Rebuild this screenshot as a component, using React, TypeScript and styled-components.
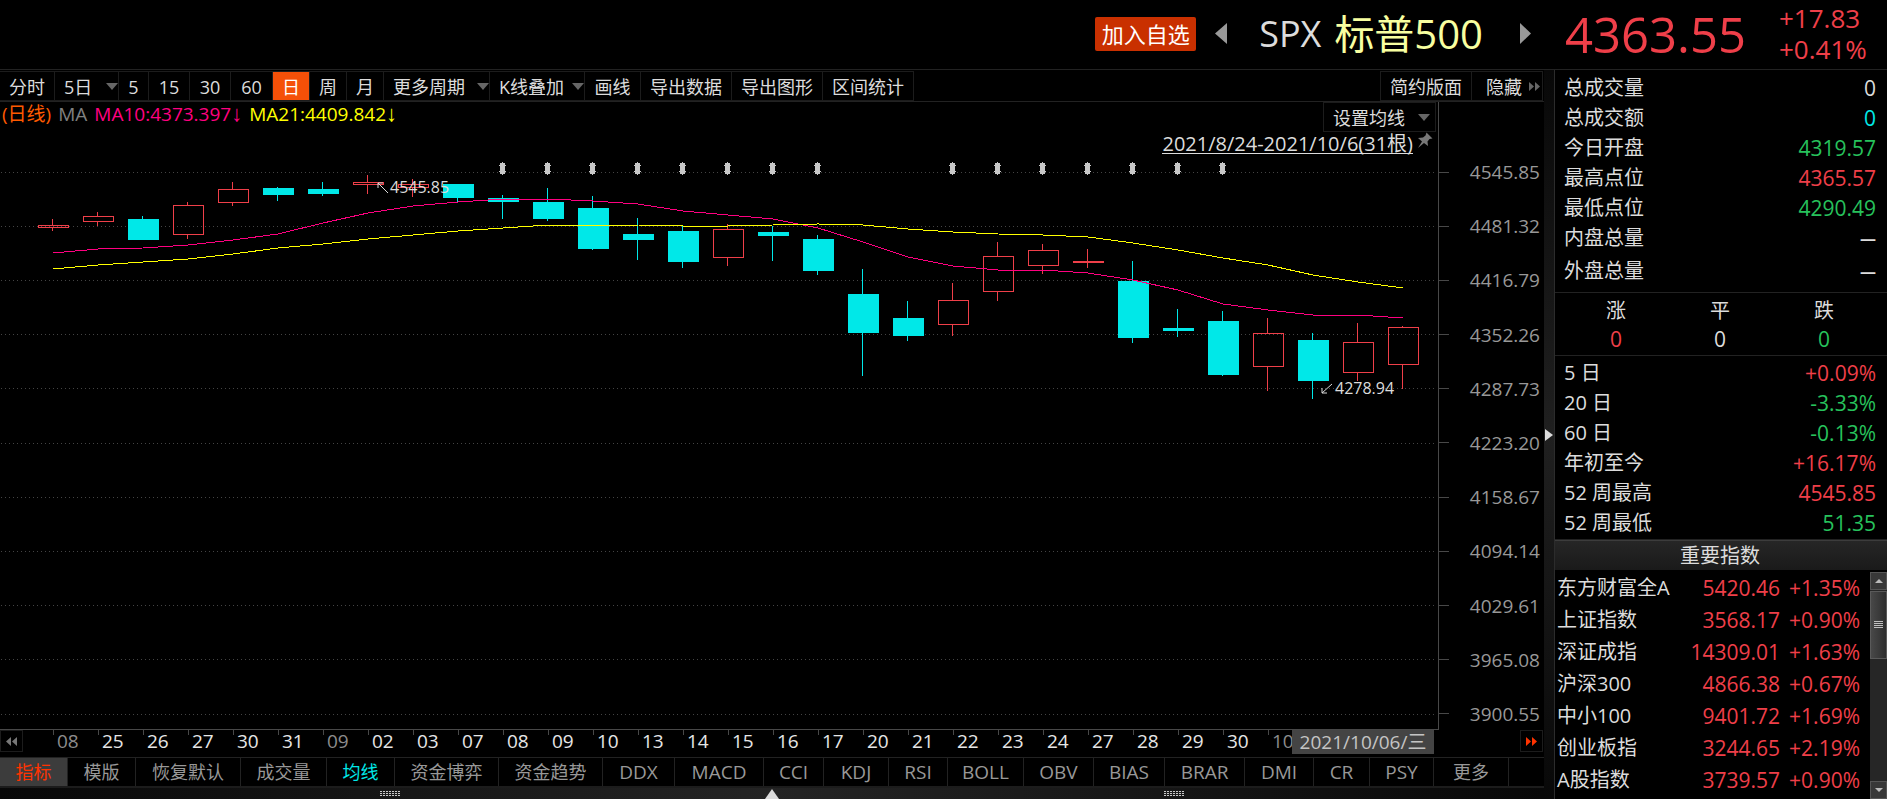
import React from "react";
import styled, { createGlobalStyle } from "styled-components";

const RED = "#ef3f49";
const GREEN = "#27c25c";
const CYAN = "#00e8e8";
const LINE = "#222222";
const TEXT = "#dcdcdc";
const MUTED = "#989898";

const GlobalStyle = createGlobalStyle`
  * { box-sizing: border-box; }
  body {
    margin: 0;
    background: #000;
    color: ${TEXT};
    font-family: "Open Sans", "Noto Sans CJK SC", sans-serif;
    font-size: 18px;
  }
  button {
    margin: 0;
    padding: 0;
    border: 0;
    background: none;
    color: inherit;
    font: inherit;
    cursor: pointer;
  }
  a { color: inherit; }
`;

/* ---------- data ---------- */

type Candle = { up: boolean; high: number; top: number; bottom: number; low: number };
const c = (up: number, high: number, top: number, bottom: number, low: number): Candle => ({
  up: up === 1, high, top, bottom, low,
});

const candles: Candle[] = [
  c(1, 219, 225, 228, 231), c(1, 212, 216, 222, 226), c(0, 216, 219, 240, 240),
  c(1, 202, 205, 235, 239), c(1, 182, 189, 203, 206), c(0, 187, 188, 195, 201),
  c(0, 182, 189, 194, 196), c(1, 175, 182, 185, 194), c(1, 179, 184, 188, 197),
  c(0, 184, 184, 198, 203), c(0, 195, 198, 202, 219), c(0, 188, 202, 219, 221),
  c(0, 196, 208, 249, 250), c(0, 218, 234, 240, 260), c(0, 225, 231, 262, 268),
  c(1, 224, 229, 258, 266), c(0, 226, 232, 236, 261), c(0, 235, 239, 271, 275),
  c(0, 269, 294, 333, 376), c(0, 301, 318, 336, 341), c(1, 283, 300, 325, 336),
  c(1, 242, 256, 292, 301), c(1, 244, 250, 266, 274), c(1, 249, 261, 263, 268),
  c(0, 261, 281, 338, 343), c(0, 309, 328, 331, 337), c(0, 311, 321, 375, 376),
  c(1, 318, 333, 367, 391), c(0, 333, 340, 381, 399), c(1, 323, 342, 373, 381),
  c(1, 326, 327, 365, 389),
];
const ma10 = [253, 249, 248, 245, 240, 234, 223, 213, 206, 202, 199, 199, 201, 204, 211, 215, 219, 228, 242, 257, 266, 270, 270, 273, 280, 290, 304, 310, 315, 315, 318];
const ma21 = [269, 265, 262, 259, 254, 248, 244, 239, 235, 231, 228, 225, 225, 225, 226, 226, 225, 224, 225, 229, 232, 234, 235, 237, 243, 250, 258, 265, 275, 282, 288];
const marks = [10, 11, 12, 13, 14, 15, 16, 17, 20, 21, 22, 23, 24, 25, 26];

const prices = ["4545.85", "4481.32", "4416.79", "4352.26", "4287.73", "4223.20", "4158.67", "4094.14", "4029.61", "3965.08", "3900.55"];
const dates = ["08", "25", "26", "27", "30", "31", "09", "02", "03", "07", "08", "09", "10", "13", "14", "15", "16", "17", "20", "21", "22", "23", "24", "27", "28", "29", "30", "10"];
const monthStarts = [0, 6, 27];

const periods: { label: string; width: number; caret?: boolean; active?: boolean }[] = [
  { label: "分时", width: 55 },
  { label: "5日", width: 64, caret: true },
  { label: "5", width: 30 },
  { label: "15", width: 41 },
  { label: "30", width: 41 },
  { label: "60", width: 42 },
  { label: "日", width: 37, active: true },
  { label: "周", width: 37 },
  { label: "月", width: 37 },
  { label: "更多周期", width: 106, caret: true },
  { label: "K线叠加", width: 95, caret: true },
  { label: "画线", width: 56 },
  { label: "导出数据", width: 91 },
  { label: "导出图形", width: 91 },
  { label: "区间统计", width: 91 },
];

const indicators: { label: string; width: number; tone?: string; active?: boolean }[] = [
  { label: "指标", width: 68, tone: "#ff3300", active: true },
  { label: "模版", width: 68 },
  { label: "恢复默认", width: 105 },
  { label: "成交量", width: 86 },
  { label: "均线", width: 68, tone: CYAN },
  { label: "资金博弈", width: 104 },
  { label: "资金趋势", width: 104 },
  { label: "DDX", width: 72 },
  { label: "MACD", width: 89 },
  { label: "CCI", width: 60 },
  { label: "KDJ", width: 65 },
  { label: "RSI", width: 59 },
  { label: "BOLL", width: 76 },
  { label: "OBV", width: 70 },
  { label: "BIAS", width: 71 },
  { label: "BRAR", width: 80 },
  { label: "DMI", width: 69 },
  { label: "CR", width: 56 },
  { label: "PSY", width: 64 },
  { label: "更多", width: 75 },
];

const quotes: [string, string, string][] = [
  ["总成交量", "0", TEXT],
  ["总成交额", "0", CYAN],
  ["今日开盘", "4319.57", GREEN],
  ["最高点位", "4365.57", RED],
  ["最低点位", "4290.49", GREEN],
  ["内盘总量", "—", TEXT],
  ["外盘总量", "—", TEXT],
];
const changes: [string, string, string][] = [
  ["5 日", "+0.09%", RED],
  ["20 日", "-3.33%", GREEN],
  ["60 日", "-0.13%", GREEN],
  ["年初至今", "+16.17%", RED],
  ["52 周最高", "4545.85", RED],
  ["52 周最低", "51.35", GREEN],
];
const indexes: [string, string, string][] = [
  ["东方财富全A", "5420.46", "+1.35%"],
  ["上证指数", "3568.17", "+0.90%"],
  ["深证成指", "14309.01", "+1.63%"],
  ["沪深300", "4866.38", "+0.67%"],
  ["中小100", "9401.72", "+1.69%"],
  ["创业板指", "3244.65", "+2.19%"],
  ["A股指数", "3739.57", "+0.90%"],
];

/* ---------- shell ---------- */

const Page = styled.div`
  display: flex;
  flex-direction: column;
  min-height: 100vh;
`;
const Header = styled.header`
  display: flex;
  height: 70px;
  border-bottom: 1px solid ${LINE};
`;
const Instrument = styled.div`
  flex: 1;
  display: flex;
  align-items: center;
  justify-content: flex-end;
  padding-right: 24px;
  padding-bottom: 1px;
`;
const AddButton = styled.button`
  width: 101px;
  height: 34px;
  margin-right: 19px;
  border-radius: 2px;
  background: #c93000;
  color: #fff;
  font-size: 22px;
  line-height: 34px;
`;
const StepButton = styled.button`
  display: flex;
  padding-bottom: 2px;
  color: #999;
`;
const Symbol = styled.h1`
  display: flex;
  align-items: center;
  gap: 13px;
  margin: 0 37px 0 32px;
  font-size: 36px;
  font-weight: 400;
  line-height: 60px;
`;
const SymbolName = styled.span`
  color: #f8ffa0;
  font-size: 40px;
`;
const Price = styled.div`
  display: flex;
  align-items: center;
  width: 332px;
  padding: 0 0 2px 10px;
  color: ${RED};
`;
const PriceNow = styled.div`
  width: 214px;
  font-size: 49px;
  line-height: 64px;
`;
const PriceMove = styled.div`
  font-size: 26px;
  line-height: 31px;
`;
const Body = styled.div`
  flex: 1;
  display: flex;
`;
const Main = styled.main`
  flex: 1;
  min-width: 0;
  display: flex;
  flex-direction: column;
`;
const Splitter = styled.div`
  display: flex;
  align-items: center;
  justify-content: center;
  width: 11px;
  border-right: 1px solid #2c2c2c;
  background: linear-gradient(#080808, #202020 50%, #080808);
`;

/* ---------- toolbar ---------- */

const Toolbar = styled.div`
  display: flex;
  height: 32px;
  padding: 1px 0 0;
  border-bottom: 1px solid ${LINE};
`;
const ToolButton = styled.button<{ $width: number; $active?: boolean; $caret?: boolean }>`
  display: flex;
  align-items: center;
  justify-content: ${(p) => (p.$caret ? "space-between" : "center")};
  width: ${(p) => p.$width}px;
  height: 30px;
  padding: ${(p) => (p.$caret ? "2px 0 0 9px" : "2px 0 0")};
  border: 1px solid #1c1c1c;
  border-left-width: 0;
  background: ${(p) => (p.$active ? "#f55008" : "transparent")};
  color: ${(p) => (p.$active ? "#fff" : TEXT)};
  line-height: 26px;
  white-space: nowrap;
`;
const ToolGap = styled.div`
  flex: 1;
`;
const RightTools = styled.div`
  display: flex;
  margin-right: 1px;
  border-left: 1px solid #1c1c1c;
`;
const HideButton = styled(ToolButton)`
  justify-content: flex-end;
  gap: 7px;
  padding-right: 2px;
`;

/* ---------- chart ---------- */

const ChartRow = styled.section`
  display: flex;
`;
const Plot = styled.div`
  position: relative;
  flex: 1;
  min-width: 0;
  svg.plot { display: block; width: 100%; height: auto; }
`;
const Legend = styled.div`
  position: absolute;
  top: 0;
  left: 2px;
  display: flex;
  gap: 7px;
  font-size: 19px;
  line-height: 24px;
`;
const LegendItem = styled.span<{ $color: string }>`
  color: ${(p) => p.$color};
`;
const Arrow = styled.span`
  font-family: "Liberation Sans", sans-serif;
  font-size: 22px;
  font-weight: 700;
  line-height: 20px;
`;
const PlotTools = styled.div`
  position: absolute;
  top: 0;
  right: 2px;
  display: flex;
  flex-direction: column;
  align-items: flex-end;
`;
const AverageButton = styled.button`
  display: flex;
  align-items: center;
  justify-content: space-between;
  width: 113px;
  height: 30px;
  padding: 2px 5px 0 9px;
  border: 1px solid #1c1c1c;
  line-height: 26px;
`;
const Range = styled.div`
  display: flex;
  gap: 4px;
  padding-right: 3px;
  font-size: 20px;
`;
const RangeLink = styled.a`
  height: 22px;
  border-bottom: 1px solid ${TEXT};
  line-height: 24px;
  text-decoration: none;
`;
const PriceAxis = styled.div`
  display: flex;
  flex-direction: column;
  justify-content: space-between;
  width: 106px;
  padding: 58px 0 4px;
  border-left: 1px solid #484848;
`;
const AxisPrice = styled.div`
  display: flex;
  align-items: center;
  justify-content: space-between;
  height: 24px;
  padding-right: 4px;
  color: ${MUTED};
  font-size: 19px;
  line-height: 24px;
  &::before {
    content: "";
    width: 10px;
    height: 1px;
    background: #484848;
  }
`;
const DateRow = styled.div`
  display: flex;
  height: 27px;
`;
const PageButton = styled.button<{ $color: string }>`
  display: flex;
  align-items: center;
  justify-content: center;
  width: 23px;
  height: 22px;
  border: 1px solid #1c1c1c;
  color: ${(p) => p.$color};
`;
const DateAxis = styled.div`
  position: relative;
  flex: 1;
  display: grid;
  grid-template-columns: repeat(30, 1fr);
  margin-left: 30px;
  padding-right: 35px;
`;
const AxisDate = styled.div<{ $month: boolean }>`
  padding-left: 4px;
  background: linear-gradient(#484848, #484848) 0 0 / 1px 5px no-repeat;
  color: ${(p) => (p.$month ? "#8c8c8c" : "#e6e6e6")};
  font-size: 19px;
  line-height: 23px;
`;
const DateTag = styled.div`
  position: absolute;
  top: 0;
  right: 4px;
  width: 142px;
  height: 24px;
  background: #444;
  color: #c4c4c4;
  font-size: 19px;
  line-height: 24px;
  text-align: center;
`;
const DateEnd = styled.div`
  display: flex;
  justify-content: flex-end;
  width: 106px;
  padding-right: 1px;
`;

/* ---------- indicator tabs ---------- */

const Tabs = styled.nav`
  display: flex;
  height: 31px;
  border-top: 1px solid ${LINE};
  border-bottom: 2px solid #1c1c1c;
`;
const Tab = styled.button<{ $width: number; $tone?: string; $active?: boolean; $latin: boolean }>`
  width: ${(p) => p.$width}px;
  border-right: 1px solid ${LINE};
  background: ${(p) => (p.$active ? "#3c3c3c" : "transparent")};
  color: ${(p) => p.$tone ?? MUTED};
  font-size: ${(p) => (p.$latin ? 19 : 18)}px;
  line-height: 28px;
`;
const BottomStrip = styled.div`
  flex: 1;
  display: grid;
  grid-template-columns: 1fr 14px 1fr;
  align-items: center;
  min-height: 11px;
  background: linear-gradient(90deg, #080808, #242424 50%, #080808);
`;
const Grip = styled.span<{ $side: "left" | "right" }>`
  width: 20px;
  height: 5px;
  justify-self: ${(p) => (p.$side === "left" ? "end" : "start")};
  margin: ${(p) => (p.$side === "left" ? "0 365px 0 0" : "0 0 0 385px")};
  background:
    repeating-linear-gradient(transparent 0 1px, #1c1c1c 1px 2px),
    repeating-linear-gradient(90deg, #c8c8c8 0 2px, #1c1c1c 2px 3px);
`;

/* ---------- side panel ---------- */

const Side = styled.aside`
  width: 332px;
  font-size: 20px;
`;
const StatTable = styled.table`
  width: 100%;
  border-collapse: collapse;
`;
const StatBlock = styled.div<{ $pad: string }>`
  padding: ${(p) => p.$pad};
  border-bottom: 1px solid ${LINE};
`;
const StatName = styled.th`
  height: 30px;
  padding: 0;
  font-weight: 400;
  line-height: 30px;
  text-align: left;
`;
const StatValue = styled.td<{ $color: string; $empty: boolean }>`
  height: 30px;
  padding: 0;
  color: ${(p) => p.$color};
  font-size: ${(p) => (p.$empty ? 16 : 21)}px;
  font-weight: ${(p) => (p.$empty ? 700 : 400)};
  line-height: 30px;
  text-align: right;
`;
const SpacerRow = styled.tr`
  height: 3px;
`;
const Counts = styled.dl`
  display: grid;
  grid-template-columns: repeat(3, 1fr);
  margin: 0;
  padding: 4px 11px 2px 9px;
  border-bottom: 1px solid ${LINE};
  line-height: 28px;
  text-align: center;
  dt, dd { margin: 0; }
`;
const Count = styled.dd<{ $color: string }>`
  color: ${(p) => p.$color};
  font-size: 21px;
`;
const SectionTitle = styled.h2`
  height: 30px;
  margin: 0;
  padding-right: 2px;
  border-top: 1px solid #3c3c3c;
  background: linear-gradient(#262626, #1a1a1a);
  font-size: 20px;
  font-weight: 400;
  line-height: 30px;
  text-align: center;
`;
const IndexArea = styled.div`
  display: flex;
  align-items: stretch;
  height: 229px;
  padding-top: 2px;
`;
const IndexTable = styled.table`
  flex: 1;
  height: 224px;
  border-collapse: collapse;
  table-layout: fixed;
`;
const IndexName = styled.th`
  width: 124px;
  padding: 0 0 0 2px;
  font-weight: 400;
  line-height: 32px;
  text-align: left;
  white-space: nowrap;
`;
const IndexValue = styled.td`
  padding: 0;
  color: ${RED};
  font-size: 21px;
  line-height: 32px;
  text-align: right;
`;
const ScrollBar = styled.div`
  display: flex;
  flex-direction: column;
  width: 17px;
  margin-left: 10px;
  background: #262626;
`;
const ScrollButton = styled.button`
  display: flex;
  align-items: center;
  justify-content: center;
  height: 18px;
  border: 1px solid #555;
  background: #383838;
  color: #bbb;
`;
const Thumb = styled.div`
  display: flex;
  align-items: center;
  justify-content: center;
  height: 68px;
  margin: 1px 0 auto;
  border: 1px solid #5a5a5a;
  background: linear-gradient(90deg, #484848, #2e2e2e);
`;
const ThumbLines = styled.span`
  width: 9px;
  height: 8px;
  background: repeating-linear-gradient(#c0c0c0 0 1px, transparent 1px 2px);
`;

/* ---------- icons ---------- */

const Triangle = ({ w, h, dir }: { w: number; h: number; dir: "left" | "right" | "up" | "down" }) => {
  const points = {
    left: `${w},0 ${w},${h} 0,${h / 2}`,
    right: `0,0 0,${h} ${w},${h / 2}`,
    up: `0,${h} ${w},${h} ${w / 2},0`,
    down: `0,0 ${w},0 ${w / 2},${h}`,
  }[dir];
  return (
    <svg width={w} height={h} aria-hidden="true">
      <polygon points={points} fill="currentColor" />
    </svg>
  );
};
const Caret = styled.span`
  display: flex;
  padding-bottom: 2px;
  color: #666;
`;
const DoubleArrow = ({ flip }: { flip?: boolean }) => (
  <svg width="11" height="9" viewBox="0 0 11 9" aria-hidden="true">
    <path d={flip ? "M5 0V9L0 4.5ZM11 0V9L6 4.5Z" : "M0 0V9L5 4.5ZM6 0V9L11 4.5Z"} fill="currentColor" />
  </svg>
);
const Pin = () => (
  <svg width="16" height="17" viewBox="0 0 16 17" aria-hidden="true">
    <path d="M9.5 0.5L15.5 6.5L12.5 7L10.5 9.5L11 14L7 11L1 16L5 9.5L1 6L6 5.5L8.5 3.5Z" fill="#777" />
  </svg>
);

const STEP = 45;
const FIRST = 53;
const cx = (i: number) => FIRST + i * STEP;
const linePath = (ys: number[]) => ys.map((y, i) => `${i ? "L" : "M"}${cx(i)} ${y}`).join("");

const CandlePlot = () => (
  <svg className="plot" viewBox="0 102 1438 628" role="img" aria-label="标普500 日线">
    {prices.map((p, i) => {
      const y = Math.floor(172 + i * 54.2) + 0.5;
      return <line key={p} x1="1" x2="1436" y1={y} y2={y} stroke="#444" strokeDasharray="1 3" />;
    })}
    <line x1="0" x2="1438" y1="729.5" y2="729.5" stroke="#484848" />
    {candles.map((k, i) => {
      const x = cx(i);
      const color = k.up ? RED : CYAN;
      const hollow = k.up && k.bottom - k.top > 2;
      return (
        <g key={i} stroke={color}>
          <path d={`M${x - 0.5} ${k.high}V${k.top}M${x - 0.5} ${k.bottom}V${k.low}`} />
          {hollow ? (
            <rect x={x - 14.5} y={k.top + 0.5} width="30" height={k.bottom - k.top - 1} fill="none" />
          ) : (
            <rect x={x - 15} y={k.top} width="31" height={k.bottom - k.top} fill={color} stroke="none" />
          )}
        </g>
      );
    })}
    <g fill="none" shapeRendering="crispEdges">
      <path d={linePath(ma10)} stroke="#ff0080" />
      <path d={linePath(ma21)} stroke="#ffff00" />
    </g>
    {marks.map((i) => (
      <path
        key={i}
        transform={`translate(${cx(i) - 4} 162)`}
        d="M3 0H4V1H6V3H7V4H6V9H7V10H6V12H4V13H3V12H1V10H0V9H1V4H0V3H1V1H3Z"
        fill="#c8c8c8"
      />
    ))}
    <g fill="none" stroke={TEXT}>
      <path d="M388 193L378 183M378 188V183H383" />
      <path d="M1332 384L1322 393M1322 388V393H1327" />
    </g>
    <g fill={TEXT} fontSize="16">
      <text x="390" y="193">4545.85</text>
      <text x="1335" y="394">4278.94</text>
    </g>
  </svg>
);

const Stats = ({ rows, lastGap }: { rows: [string, string, string][]; lastGap?: boolean }) => (
  <StatTable>
    <tbody>
      {rows.map(([name, value, color], i) => (
        <React.Fragment key={name}>
          {lastGap && i === rows.length - 1 && <SpacerRow />}
          <tr>
            <StatName scope="row">{name}</StatName>
            <StatValue $color={color} $empty={value === "—"}>{value}</StatValue>
          </tr>
        </React.Fragment>
      ))}
    </tbody>
  </StatTable>
);

export default function App() {
  return (
    <Page>
      <GlobalStyle />
      <Header>
        <Instrument>
          <AddButton>加入自选</AddButton>
          <StepButton aria-label="上一个"><Triangle w={12} h={21} dir="left" /></StepButton>
          <Symbol>
            <span>SPX</span>
            <SymbolName>标普500</SymbolName>
          </Symbol>
          <StepButton aria-label="下一个"><Triangle w={11} h={21} dir="right" /></StepButton>
        </Instrument>
        <Price>
          <PriceNow>4363.55</PriceNow>
          <PriceMove>
            <div>+17.83</div>
            <div>+0.41%</div>
          </PriceMove>
        </Price>
      </Header>
      <Body>
        <Main>
          <Toolbar>
            {periods.map((p) => (
              <ToolButton key={p.label} $width={p.width} $active={p.active} $caret={p.caret}>
                {p.label}
                {p.caret && <Caret><Triangle w={12} h={7} dir="down" /></Caret>}
              </ToolButton>
            ))}
            <ToolGap />
            <RightTools>
              <ToolButton $width={91}>简约版面</ToolButton>
              <HideButton $width={71}>
                隐藏
                <Caret><DoubleArrow /></Caret>
              </HideButton>
            </RightTools>
          </Toolbar>
          <ChartRow>
            <Plot>
              <CandlePlot />
              <Legend>
                <LegendItem $color="#ff5a00">(日线)</LegendItem>
                <LegendItem $color="#808080">MA</LegendItem>
                <LegendItem $color="#ff0080">MA10:4373.397<Arrow>↓</Arrow></LegendItem>
                <LegendItem $color="#ffff00">MA21:4409.842<Arrow>↓</Arrow></LegendItem>
              </Legend>
              <PlotTools>
                <AverageButton>
                  设置均线
                  <Caret><Triangle w={12} h={7} dir="down" /></Caret>
                </AverageButton>
                <Range>
                  <RangeLink href="#range">2021/8/24-2021/10/6(31根)</RangeLink>
                  <Pin />
                </Range>
              </PlotTools>
            </Plot>
            <PriceAxis>
              {prices.map((p) => <AxisPrice key={p}>{p}</AxisPrice>)}
            </PriceAxis>
          </ChartRow>
          <DateRow>
            <PageButton $color="#777" aria-label="向前"><DoubleArrow flip /></PageButton>
            <DateAxis>
              {dates.map((d, i) => (
                <AxisDate key={i} $month={monthStarts.includes(i)}>{d}</AxisDate>
              ))}
              <DateTag>2021/10/06/三</DateTag>
            </DateAxis>
            <DateEnd>
              <PageButton $color="#ff3300" aria-label="向后"><DoubleArrow /></PageButton>
            </DateEnd>
          </DateRow>
          <Tabs>
            {indicators.map((t) => (
              <Tab key={t.label} $width={t.width} $tone={t.tone} $active={t.active} $latin={/^[A-Z]+$/.test(t.label)}>
                {t.label}
              </Tab>
            ))}
          </Tabs>
          <BottomStrip>
            <Grip $side="left" />
            <Triangle w={14} h={10} dir="up" />
            <Grip $side="right" />
          </BottomStrip>
        </Main>
        <Splitter>
          <Triangle w={8} h={12} dir="right" />
        </Splitter>
        <Side>
          <StatBlock $pad="3px 11px 6px 9px"><Stats rows={quotes} lastGap /></StatBlock>
          <Counts>
            <dt>涨</dt><dt>平</dt><dt>跌</dt>
            <Count $color={RED}>0</Count>
            <Count $color={TEXT}>0</Count>
            <Count $color={GREEN}>0</Count>
          </Counts>
          <StatBlock $pad="2px 11px 1px 9px"><Stats rows={changes} /></StatBlock>
          <SectionTitle>重要指数</SectionTitle>
          <IndexArea>
            <IndexTable>
              <tbody>
                {indexes.map(([name, value, pct]) => (
                  <tr key={name}>
                    <IndexName scope="row">{name}</IndexName>
                    <IndexValue>{value}</IndexValue>
                    <IndexValue>{pct}</IndexValue>
                  </tr>
                ))}
              </tbody>
            </IndexTable>
            <ScrollBar>
              <ScrollButton aria-label="向上滚动"><Triangle w={8} h={4} dir="up" /></ScrollButton>
              <Thumb><ThumbLines /></Thumb>
              <ScrollButton aria-label="向下滚动"><Triangle w={8} h={4} dir="down" /></ScrollButton>
            </ScrollBar>
          </IndexArea>
        </Side>
      </Body>
    </Page>
  );
}
